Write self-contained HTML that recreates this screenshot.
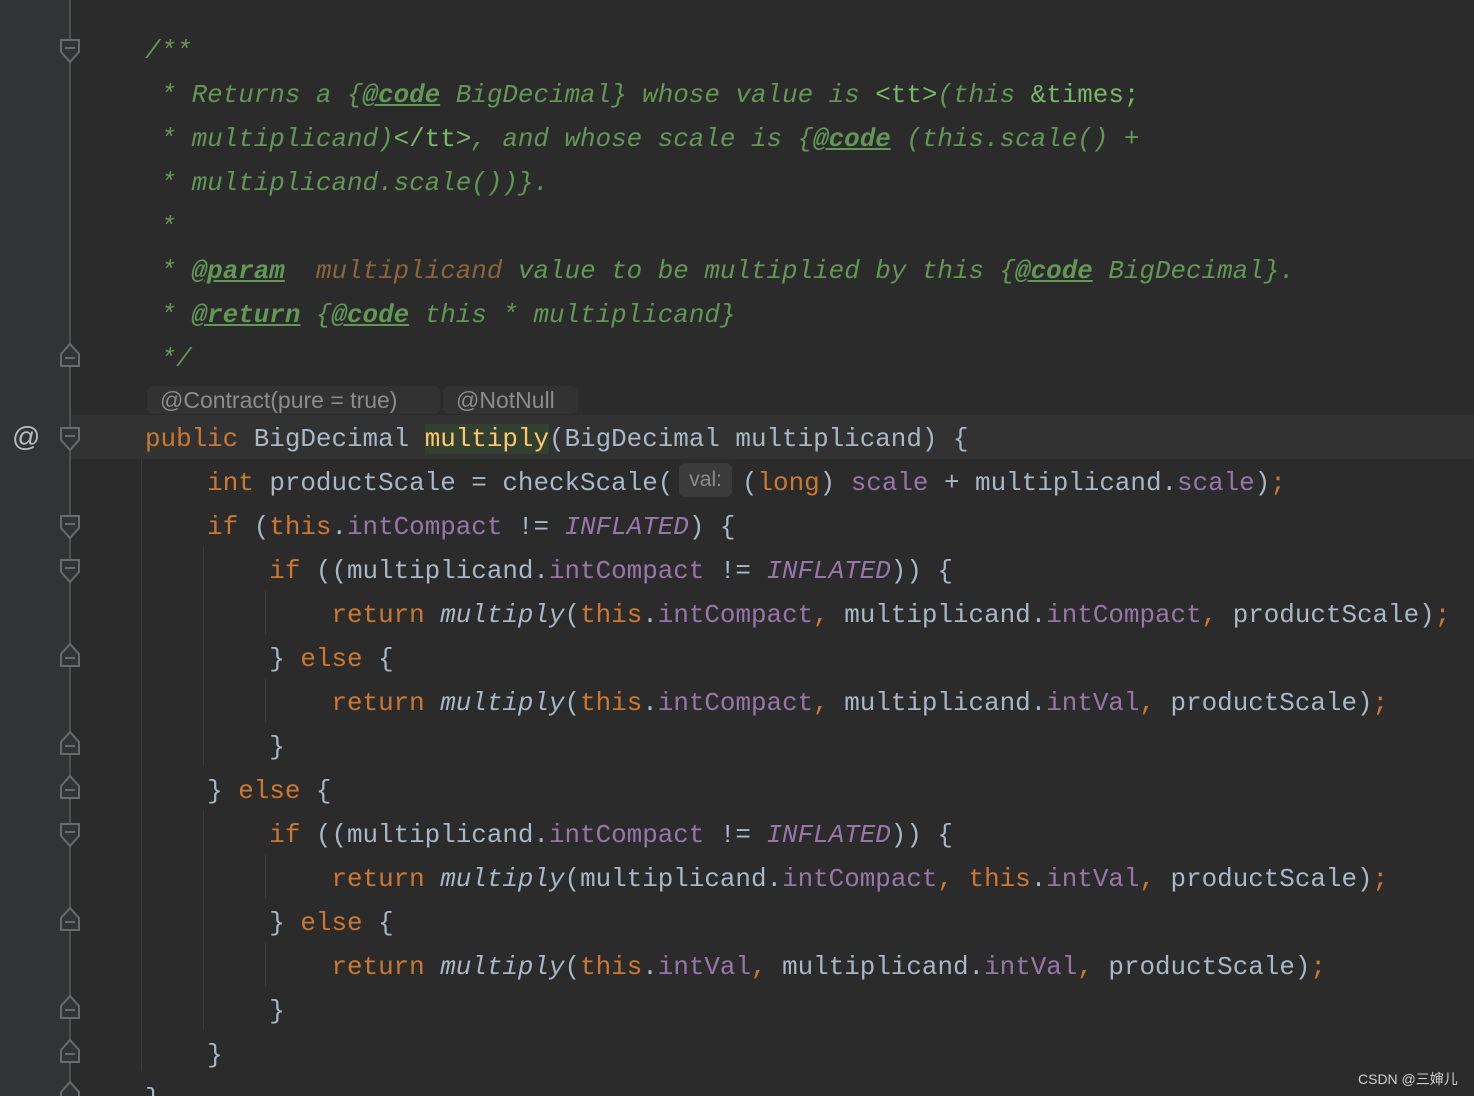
<!DOCTYPE html>
<html><head><meta charset="utf-8"><style>
*{margin:0;padding:0}
html{width:1474px;height:1096px;overflow:hidden}
body{width:1474px;height:1096px;background:#2b2b2b;position:relative;overflow:hidden;font-family:"Liberation Mono",monospace;font-size:25.9px;color:#a9b7c6}
.gut{position:absolute;left:0;top:0;width:70px;height:1096px;background:#313335}
.ln{position:absolute;left:145px;height:44px;line-height:44px;white-space:pre;margin-top:2px}
.c{color:#629755;font-style:italic}
.t{color:#77b767;font-style:normal}
.u{text-decoration:underline;font-weight:bold}
.pm{color:#8a653b}
.k{color:#cc7832}
.f{color:#9876aa}
.fi{color:#9876aa;font-style:italic}
.m{font-style:italic}
.y{color:#ffc66d;background:#32402f}
.g{position:absolute;background:#3b3b3b;width:1px}
.hint{display:inline-block;background:#3b3b3b;color:#8c8c8c;font-family:"Liberation Sans",sans-serif;font-size:21px;line-height:34px;height:34px;border-radius:6px;padding:0 10px;vertical-align:middle;margin:0 10px 0 6px;position:relative;top:-3px}
.ann{position:absolute;top:386px;height:28px;line-height:28px;background:#323232;color:#8c8c8c;font-family:"Liberation Sans",sans-serif;font-size:23px;border-radius:6px;padding:0 10px 0 13px}
</style></head><body>
<div class="gut"></div>
<div style="position:absolute;left:70px;top:415px;width:1404px;height:44px;background:#323232"></div>
<div style="position:absolute;left:69px;top:0;width:2px;height:1096px;background:#505050"></div>
<svg style="position:absolute;left:0;top:0" width="100" height="1096">
<g fill="#313335" stroke="#6a6a6a" stroke-width="2">
<path d="M61 40h18v12l-9 10l-9-10z"/>
<path d="M61 366h18v-12l-9-10l-9 10z"/>
<path d="M61 428h18v12l-9 10l-9-10z"/>
<path d="M61 516h18v12l-9 10l-9-10z"/>
<path d="M61 560h18v12l-9 10l-9-10z"/>
<path d="M61 666h18v-12l-9-10l-9 10z"/>
<path d="M61 754h18v-12l-9-10l-9 10z"/>
<path d="M61 798h18v-12l-9-10l-9 10z"/>
<path d="M61 824h18v12l-9 10l-9-10z"/>
<path d="M61 930h18v-12l-9-10l-9 10z"/>
<path d="M61 1018h18v-12l-9-10l-9 10z"/>
<path d="M61 1062h18v-12l-9-10l-9 10z"/>
<path d="M61 1104h18v-12l-9-10l-9 10z"/>
</g>
<g stroke="#6a6a6a" stroke-width="2">
<path d="M65 48h10M65 358h10M65 436h10M65 524h10M65 568h10M65 658h10M65 746h10M65 790h10M65 832h10M65 922h10M65 1010h10M65 1054h10"/>
</g>
</svg>
<div style="position:absolute;left:12px;top:415px;line-height:44px;font-family:'Liberation Sans',sans-serif;font-size:28px;color:#bbb">@</div>
<div class="g" style="left:141px;top:459px;height:612px"></div>
<div class="g" style="left:203px;top:547px;height:218px"></div>
<div class="g" style="left:203px;top:811px;height:218px"></div>
<div class="g" style="left:265px;top:591px;height:44px"></div>
<div class="g" style="left:265px;top:679px;height:44px"></div>
<div class="g" style="left:265px;top:855px;height:44px"></div>
<div class="g" style="left:265px;top:943px;height:44px"></div>

<div class="ln c" style="top:27px">/**</div>
<div class="ln c" style="top:71px"> * Returns a {<span class="u">@code</span> BigDecimal} whose value is <span class="t">&lt;tt&gt;</span>(this <span class="t">&amp;times;</span></div>
<div class="ln c" style="top:115px"> * multiplicand)<span class="t">&lt;/tt&gt;</span>, and whose scale is {<span class="u">@code</span> (this.scale() +</div>
<div class="ln c" style="top:159px"> * multiplicand.scale())}.</div>
<div class="ln c" style="top:203px"> *</div>
<div class="ln c" style="top:247px"> * <span class="u">@param</span>  <span class="pm">multiplicand</span> value to be multiplied by this {<span class="u">@code</span> BigDecimal}.</div>
<div class="ln c" style="top:291px"> * <span class="u">@return</span> {<span class="u">@code</span> this * multiplicand}</div>
<div class="ln c" style="top:335px"> */</div>
<div class="ann" style="left:147px;width:270px">@Contract(pure = true)</div>
<div class="ann" style="left:443px;width:112px">@NotNull</div>
<div class="ln" style="top:415px"><span class="k">public</span> BigDecimal <span class="y">multiply</span>(BigDecimal multiplicand) {</div>
<div class="ln" style="top:459px">    <span class="k">int</span> productScale = checkScale(<span class="hint">val:</span>(<span class="k">long</span>) <span class="f">scale</span> + multiplicand.<span class="f">scale</span>)<span class="k">;</span></div>
<div class="ln" style="top:503px">    <span class="k">if</span> (<span class="k">this</span>.<span class="f">intCompact</span> != <span class="fi">INFLATED</span>) {</div>
<div class="ln" style="top:547px">        <span class="k">if</span> ((multiplicand.<span class="f">intCompact</span> != <span class="fi">INFLATED</span>)) {</div>
<div class="ln" style="top:591px">            <span class="k">return</span> <span class="m">multiply</span>(<span class="k">this</span>.<span class="f">intCompact</span><span class="k">,</span> multiplicand.<span class="f">intCompact</span><span class="k">,</span> productScale)<span class="k">;</span></div>
<div class="ln" style="top:635px">        } <span class="k">else</span> {</div>
<div class="ln" style="top:679px">            <span class="k">return</span> <span class="m">multiply</span>(<span class="k">this</span>.<span class="f">intCompact</span><span class="k">,</span> multiplicand.<span class="f">intVal</span><span class="k">,</span> productScale)<span class="k">;</span></div>
<div class="ln" style="top:723px">        }</div>
<div class="ln" style="top:767px">    } <span class="k">else</span> {</div>
<div class="ln" style="top:811px">        <span class="k">if</span> ((multiplicand.<span class="f">intCompact</span> != <span class="fi">INFLATED</span>)) {</div>
<div class="ln" style="top:855px">            <span class="k">return</span> <span class="m">multiply</span>(multiplicand.<span class="f">intCompact</span><span class="k">,</span> <span class="k">this</span>.<span class="f">intVal</span><span class="k">,</span> productScale)<span class="k">;</span></div>
<div class="ln" style="top:899px">        } <span class="k">else</span> {</div>
<div class="ln" style="top:943px">            <span class="k">return</span> <span class="m">multiply</span>(<span class="k">this</span>.<span class="f">intVal</span><span class="k">,</span> multiplicand.<span class="f">intVal</span><span class="k">,</span> productScale)<span class="k">;</span></div>
<div class="ln" style="top:987px">        }</div>
<div class="ln" style="top:1031px">    }</div>
<div class="ln" style="top:1075px;height:21px;overflow:hidden">}</div>
<div style="position:absolute;left:1358px;top:1069px;font-family:'Liberation Sans','Noto Sans CJK SC',sans-serif;font-size:14px;color:#d0d0d0">CSDN @三婶儿</div>
</body></html>
